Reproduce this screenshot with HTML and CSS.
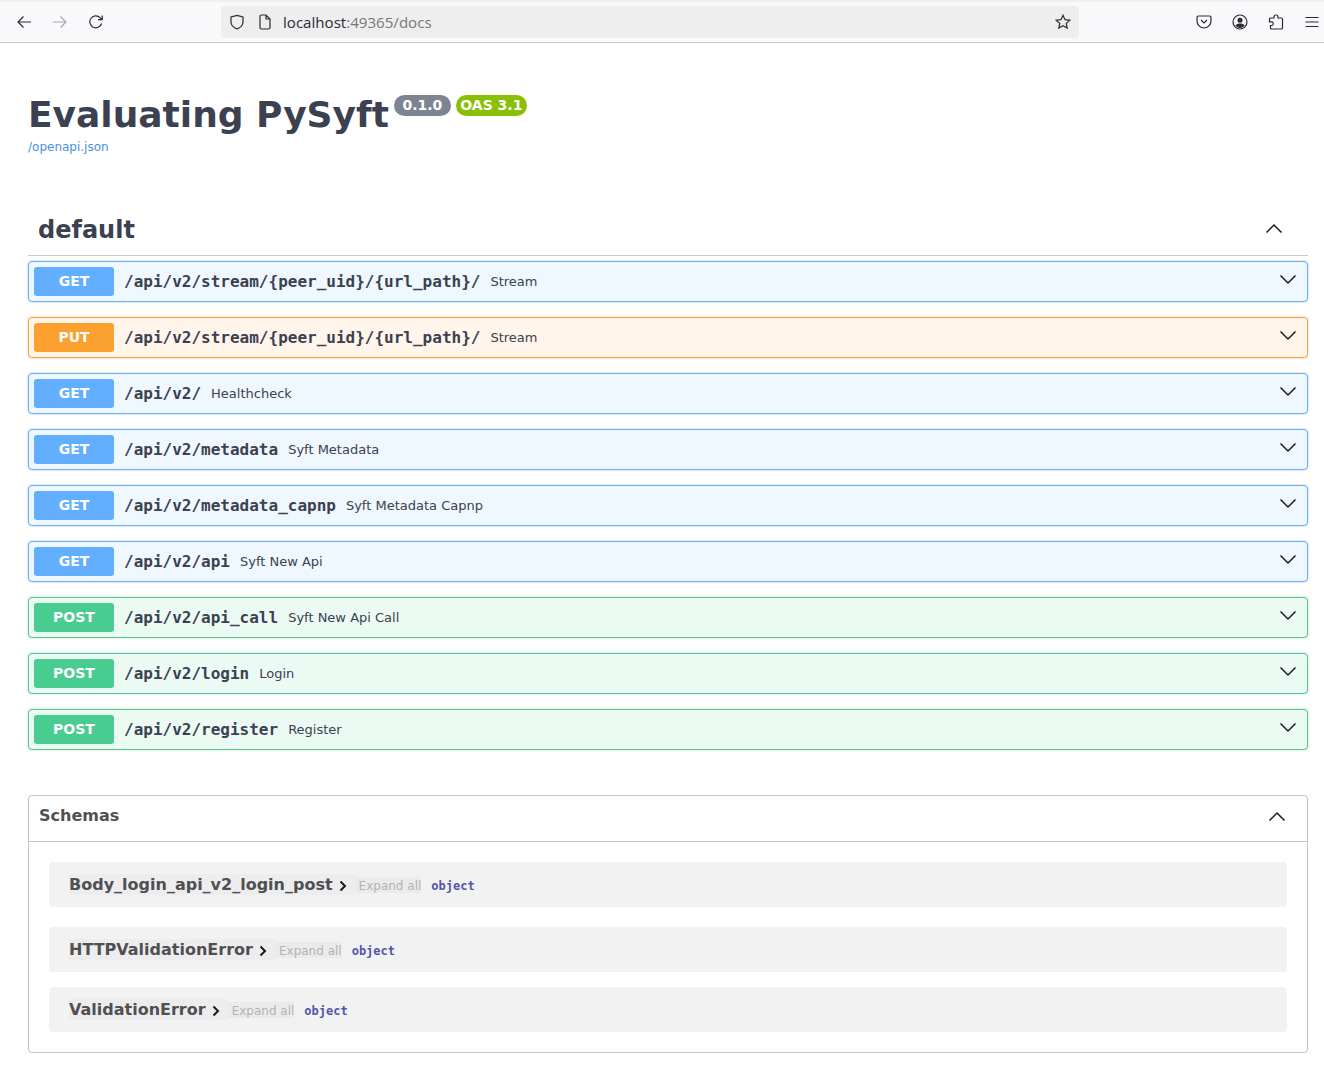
FILE: index.html
```html
<!DOCTYPE html>
<html lang="en">
<head>
    <meta charset="UTF-8">
    <title>Evaluating PySyft - Swagger UI</title>
    <link rel="stylesheet" href="styles.css">
</head>
<body>
    <!-- Browser toolbar -->
    <div class="topstrip"></div>
    <header class="toolbar">
        <div class="nav-buttons">
            <svg class="icon" viewBox="0 0 16 16"><path d="M15 8H2M7.500 2.500 2 8l5.500 5.500"/></svg>
            <svg class="icon faded" viewBox="0 0 16 16"><path d="M1 8h13M8.500 2.500 14 8l-5.500 5.500"/></svg>
            <svg class="icon" viewBox="0 0 16 16"><path d="M13.600 9.500A6 6 0 1 1 12.200 3.700L14 5.500M14.200 1.500v4.200H10"/></svg>
        </div>
        <div class="urlbar">
            <svg class="icon" viewBox="0 0 16 16"><path d="M8 1.300 14 3v5c0 3.400-3 5.800-6 6.900C5 13.800 2 11.400 2 8V3z"/></svg>
            <svg class="icon page-icon" viewBox="0 0 16 16"><path d="M3 2.500A1.500 1.500 0 0 1 4.500 1H9l4 4v8.500a1.500 1.500 0 0 1-1.500 1.500h-7A1.500 1.500 0 0 1 3 13.500zM9 1v4h4"/></svg>
            <span class="url">localhost<span class="url-rest">:49365/docs</span></span>
            <svg class="icon star" viewBox="0 0 16 16"><path d="M8 1.300 10 5.700l4.800.5-3.600 3.200 1 4.700L8 11.700l-4.200 2.400 1-4.700L1.200 6.200 6 5.700z"/></svg>
        </div>
        <div class="tool-buttons">
            <svg class="icon" viewBox="0 0 16 16"><path d="M2.500 2h11A1.500 1.500 0 0 1 15 3.500V7a7 7 0 0 1-14 0V3.500A1.500 1.500 0 0 1 2.500 2zM5 6l3 3 3-3"/></svg>
            <svg class="icon" viewBox="0 0 16 16"><circle cx="8" cy="8" r="7"/><circle class="solid" cx="8" cy="6.200" r="2.500"/><path class="solid" d="M3.500 11.500c1-1.500 2.500-2 4.500-2s3.500.5 4.500 2C11.500 13 10 14 8 14s-3.500-1-4.500-2.500z"/></svg>
            <svg class="icon" viewBox="0 0 16 16"><path d="M6 4V3a2 2 0 0 1 4 0v1h3.500a1 1 0 0 1 1 1v9a1 1 0 0 1-1 1H3.500a1 1 0 0 1-1-1v-2.500h1a1.800 1.800 0 0 0 0-3.600h-2V5a1 1 0 0 1 1-1z"/></svg>
            <svg class="icon" viewBox="0 0 16 16"><path d="M1.500 3.500h13M1.500 8h13M1.500 12.500h13"/></svg>
        </div>
    </header>

    <main class="swagger">
        <div class="info">
            <div class="title-row">
                <h1>Evaluating PySyft</h1>
                <span class="badge version">0.1.0</span>
                <span class="badge oas">OAS 3.1</span>
            </div>
            <a class="spec-link" href="#">/openapi.json</a>
        </div>

        <section class="tag-section">
            <div class="tag-head">
                <h3>default</h3>
                <svg class="chevron" viewBox="0 0 20 20"><path d="M17.500 13.500 10 6l-7.500 7.500"/></svg>
            </div>

            <div class="opblock get">
                <span class="method">GET</span>
                <span class="path">/api/v2/stream/{peer_uid}/{url_path}/</span>
                <span class="summary">Stream</span>
                <svg class="chevron" viewBox="0 0 20 20"><path d="M17.500 6.500 10 14 2.500 6.500"/></svg>
            </div>
            <div class="opblock put">
                <span class="method">PUT</span>
                <span class="path">/api/v2/stream/{peer_uid}/{url_path}/</span>
                <span class="summary">Stream</span>
                <svg class="chevron" viewBox="0 0 20 20"><path d="M17.500 6.500 10 14 2.500 6.500"/></svg>
            </div>
            <div class="opblock get">
                <span class="method">GET</span>
                <span class="path">/api/v2/</span>
                <span class="summary">Healthcheck</span>
                <svg class="chevron" viewBox="0 0 20 20"><path d="M17.500 6.500 10 14 2.500 6.500"/></svg>
            </div>
            <div class="opblock get">
                <span class="method">GET</span>
                <span class="path">/api/v2/metadata</span>
                <span class="summary">Syft Metadata</span>
                <svg class="chevron" viewBox="0 0 20 20"><path d="M17.500 6.500 10 14 2.500 6.500"/></svg>
            </div>
            <div class="opblock get">
                <span class="method">GET</span>
                <span class="path">/api/v2/metadata_capnp</span>
                <span class="summary">Syft Metadata Capnp</span>
                <svg class="chevron" viewBox="0 0 20 20"><path d="M17.500 6.500 10 14 2.500 6.500"/></svg>
            </div>
            <div class="opblock get">
                <span class="method">GET</span>
                <span class="path">/api/v2/api</span>
                <span class="summary">Syft New Api</span>
                <svg class="chevron" viewBox="0 0 20 20"><path d="M17.500 6.500 10 14 2.500 6.500"/></svg>
            </div>
            <div class="opblock post">
                <span class="method">POST</span>
                <span class="path">/api/v2/api_call</span>
                <span class="summary">Syft New Api Call</span>
                <svg class="chevron" viewBox="0 0 20 20"><path d="M17.500 6.500 10 14 2.500 6.500"/></svg>
            </div>
            <div class="opblock post">
                <span class="method">POST</span>
                <span class="path">/api/v2/login</span>
                <span class="summary">Login</span>
                <svg class="chevron" viewBox="0 0 20 20"><path d="M17.500 6.500 10 14 2.500 6.500"/></svg>
            </div>
            <div class="opblock post">
                <span class="method">POST</span>
                <span class="path">/api/v2/register</span>
                <span class="summary">Register</span>
                <svg class="chevron" viewBox="0 0 20 20"><path d="M17.500 6.500 10 14 2.500 6.500"/></svg>
            </div>
        </section>

        <section class="schemas">
            <div class="schemas-head">
                <h4>Schemas</h4>
                <svg class="chevron" viewBox="0 0 20 20"><path d="M17.500 13.500 10 6l-7.500 7.500"/></svg>
            </div>
            <div class="schemas-body">
                <div class="model first">
                    <span class="model-name">Body_login_api_v2_login_post
                        <svg class="arrow" viewBox="0 0 10 12"><path d="M2.500 1.500 7 6l-4.500 4.500"/></svg>
                    </span>
                    <span class="expand">Expand all</span>
                    <span class="type">object</span>
                </div>
                <div class="model second">
                    <span class="model-name">HTTPValidationError
                        <svg class="arrow" viewBox="0 0 10 12"><path d="M2.500 1.500 7 6l-4.500 4.500"/></svg>
                    </span>
                    <span class="expand">Expand all</span>
                    <span class="type">object</span>
                </div>
                <div class="model">
                    <span class="model-name">ValidationError
                        <svg class="arrow" viewBox="0 0 10 12"><path d="M2.500 1.500 7 6l-4.500 4.500"/></svg>
                    </span>
                    <span class="expand">Expand all</span>
                    <span class="type">object</span>
                </div>
            </div>
        </section>
    </main>
</body>
</html>
```

FILE: styles.css
```css
body {
    margin: 0;
    background: #fff;
    font-family: "DejaVu Sans", sans-serif;
    color: #3b4151;
}

/* browser toolbar */
.topstrip {
    height: 2px;
    background: #f0f0f0;
}
.toolbar {
    display: flex;
    align-items: center;
    height: 40px;
    background: #f9f9fb;
    border-bottom: 1px solid #c8c8c8;
}
.icon {
    width: 16px;
    height: 16px;
    flex: none;
    fill: none;
    stroke: #2b2b33;
    stroke-width: 1.200;
}
.icon .solid {
    fill: #2b2b33;
    stroke: none;
}
.icon.faded {
    stroke: #a8a8ad;
}
.nav-buttons {
    display: flex;
    gap: 20px;
    width: 221px;
    padding-left: 16px;
    box-sizing: border-box;
}
.urlbar {
    display: flex;
    align-items: center;
    width: 858px;
    height: 32px;
    padding: 0 8px;
    box-sizing: border-box;
    background: #eeeeef;
    border-radius: 4px;
}
.page-icon {
    margin-left: 12px;
}
.url {
    flex: 1;
    margin-left: 10px;
    font-family: "Open Sans", sans-serif;
    font-size: 15.100px;
    color: #2b2b33;
}
.url-rest {
    color: #77777c;
}
.tool-buttons {
    display: flex;
    gap: 20px;
    padding-left: 117px;
}

/* swagger page */
.swagger {
    padding: 0 16px 0 28px;
}
.info {
    padding-top: 50px;
}
.title-row {
    display: flex;
    align-items: flex-start;
}
h1 {
    margin: 0;
    font-size: 36px;
    line-height: 43px;
    font-weight: bold;
    color: #3b4151;
}
.badge {
    margin-top: 2px;
    border-radius: 57px;
    font-size: 14px;
    line-height: 17px;
    font-weight: bold;
    color: #fff;
}
.version {
    margin-left: 5px;
    padding: 2px 8.500px;
    background: #7d8492;
}
.oas {
    margin-left: 5px;
    padding: 2px 4.500px;
    background: #89bf04;
}
.spec-link {
    display: block;
    margin-top: 3px;
    font-size: 12px;
    line-height: 16px;
    color: #4990e2;
    text-decoration: none;
}

.tag-section {
    margin-top: 46px;
}
.tag-head {
    display: flex;
    align-items: center;
    justify-content: space-between;
    height: 55px;
    padding: 4px 24px 0 10px;
    box-sizing: border-box;
    border-bottom: 1px solid #c7c8ca;
}
.tag-head h3 {
    margin: 0;
    font-size: 24px;
    font-weight: bold;
}
.tag-head .chevron {
    margin-bottom: 2px;
}
.chevron {
    width: 20px;
    height: 20px;
    fill: none;
    stroke: #1a1a1a;
    stroke-width: 1.500;
}

.opblock {
    display: flex;
    align-items: center;
    height: 41px;
    margin-top: 5px;
    margin-bottom: 15px;
    padding: 0 9px 0 5px;
    box-sizing: border-box;
    border: 1px solid;
    border-radius: 4px;
    box-shadow: 0 0 3px rgba(0, 0, 0, 0.19);
}
.opblock + .opblock {
    margin-top: 0;
}
.opblock:last-child {
    margin-bottom: 0;
}
.opblock .chevron {
    margin-left: auto;
    margin-bottom: 6px;
}
.method {
    width: 80px;
    height: 29px;
    line-height: 29px;
    text-align: center;
    border-radius: 3px;
    font-size: 14px;
    font-weight: bold;
    color: #fff;
}
.path {
    margin-left: 10px;
    font-family: "DejaVu Sans Mono", monospace;
    font-size: 16px;
    font-weight: bold;
}
.summary {
    margin-left: 10px;
    font-size: 13px;
}
.get {
    background: #eff7ff;
    border-color: #61affe;
}
.get .method {
    background: #61affe;
}
.put {
    background: #fff5ea;
    border-color: #fca130;
}
.put .method {
    background: #fca130;
}
.post {
    background: #ecfaf4;
    border-color: #49cc90;
}
.post .method {
    background: #49cc90;
}

/* schemas */
.schemas {
    margin-top: 45px;
    border: 1px solid #c4c4c6;
    border-radius: 4px;
}
.schemas-head {
    display: flex;
    align-items: center;
    justify-content: space-between;
    height: 39px;
    padding: 0 20px 6px 10px;
    border-bottom: 1px solid #c4c4c6;
}
.schemas-head h4 {
    margin: 0;
    font-size: 16px;
    font-weight: bold;
    color: #505050;
}
.schemas-head .chevron {
    margin-top: 2px;
}
.schemas-body {
    padding: 20px;
}
.model {
    display: flex;
    align-items: center;
    height: 45px;
    padding-left: 20px;
    background: #f2f2f2;
    border-radius: 4px;
}
.model.first {
    margin-bottom: 20px;
}
.model.second {
    margin-bottom: 15px;
}
.model-name {
    display: flex;
    align-items: center;
    gap: 5px;
    height: 21px;
    padding-right: 7px;
    background: #ededf0;
    font-size: 16px;
    font-weight: bold;
    color: #505050;
}
.arrow {
    width: 10px;
    height: 12px;
    margin-top: 2px;
    fill: none;
    stroke: #1a1a1a;
    stroke-width: 2;
}
.expand {
    height: 16px;
    margin-top: 1px;
    padding-left: 4px;
    background: #ebebeb;
    font-size: 12px;
    line-height: 18px;
    color: #b3b3b3;
}
.type {
    margin-left: 10px;
    margin-top: 3px;
    font-family: "DejaVu Sans Mono", monospace;
    font-size: 12px;
    font-weight: bold;
    color: #55a;
}
```
